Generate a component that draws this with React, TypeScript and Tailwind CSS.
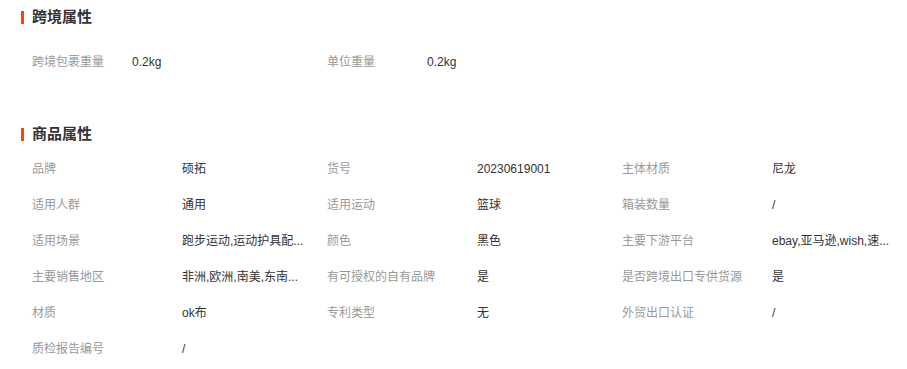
const font = { fontFamily: '"Liberation Sans", "Noto Sans CJK SC", sans-serif' }

interface Attr {
  label: string
  value: string
}

const crossBorder: Attr[] = [
  { label: '跨境包裹重量', value: '0.2kg' },
  { label: '单位重量', value: '0.2kg' },
]

// values already cut the way the page shows them
const product: Attr[] = [
  { label: '品牌', value: '硕拓' },
  { label: '货号', value: '20230619001' },
  { label: '主体材质', value: '尼龙' },
  { label: '适用人群', value: '通用' },
  { label: '适用运动', value: '篮球' },
  { label: '箱装数量', value: '/' },
  { label: '适用场景', value: '跑步运动,运动护具配...' },
  { label: '颜色', value: '黑色' },
  { label: '主要下游平台', value: 'ebay,亚马逊,wish,速...' },
  { label: '主要销售地区', value: '非洲,欧洲,南美,东南...' },
  { label: '有可授权的自有品牌', value: '是' },
  { label: '是否跨境出口专供货源', value: '是' },
  { label: '材质', value: 'ok布' },
  { label: '专利类型', value: '无' },
  { label: '外贸出口认证', value: '/' },
  { label: '质检报告编号', value: '/' },
]

const Title = ({ text }: { text: string }) => (
  <div className="flex items-center h-[34px]">
    <span className="w-[3px] h-[13px] bg-[#ff4400] mr-[8px]" />
    <span className="text-[15px] font-bold text-[#333]">{text}</span>
  </div>
)

const App = () => (
  <div className="w-[907px] h-[369px] bg-white pl-[21px] text-[12px]" style={font}>
    <Title text="跨境属性" />
    <div className="grid grid-cols-[295px_295px] pl-[11px] mt-[10px]">
      {crossBorder.map((a) => (
        <div key={a.label} className="flex items-center h-[36px]">
          <span className="w-[100px] text-[#999]">{a.label}</span>
          <span className="text-[#333]">{a.value}</span>
        </div>
      ))}
    </div>
    <div className="mt-[37px]">
      <Title text="商品属性" />
    </div>
    <div className="grid grid-cols-[295px_295px_295px] pl-[11px]">
      {product.map((a) => (
        <div key={a.label} className="flex items-center h-[36px]">
          <span className="w-[150px] shrink-0 text-[#999] whitespace-nowrap">{a.label}</span>
          <span className="whitespace-nowrap text-[#333]">{a.value}</span>
        </div>
      ))}
    </div>
  </div>
)

export default App
